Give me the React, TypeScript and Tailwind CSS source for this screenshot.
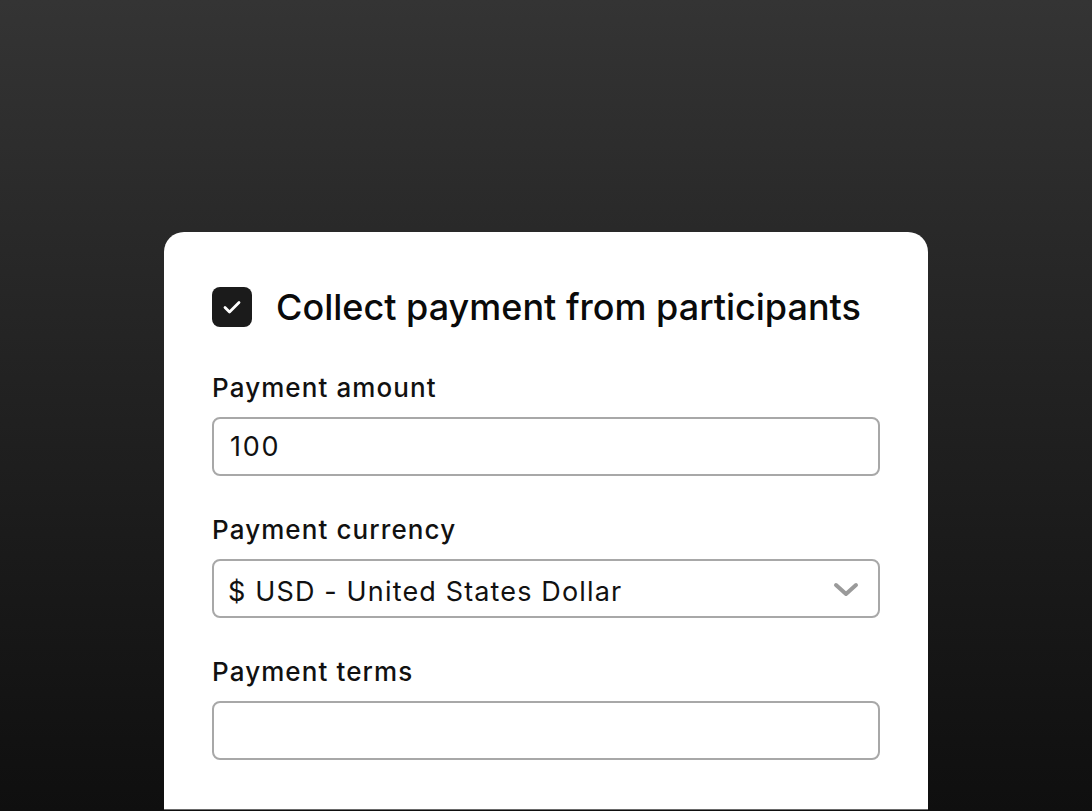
import { useState } from "react";

function Field({ label, children }: { label: string; children: React.ReactNode }) {
  return (
    <div className="flex flex-col">
      <label className="text-[26px] leading-[34px] font-medium tracking-[1.1px] text-[#111]">{label}</label>
      <div className="mt-[12px]">{children}</div>
    </div>
  );
}

export default function App() {
  const [amount, setAmount] = useState("100");
  const [terms, setTerms] = useState("");

  return (
    <div
      className="flex h-[811px] w-full justify-center overflow-hidden bg-gradient-to-b from-[#343434] to-[#0f0f0f] pt-[232px]"
      style={{ fontFamily: "Inter, 'Noto Sans', sans-serif" }}
    >
      <section className="h-[578px] w-[764px] shrink-0 rounded-t-[20px] border-b border-[#6a6a6a] bg-white px-[48px] pt-[55px]">
        <div className="flex items-center gap-[24px]">
          <span className="flex h-[40px] w-[40px] items-center justify-center rounded-[8px] bg-[#1b1b1b]">
            <svg width="24" height="24" viewBox="0 0 24 24" fill="none" stroke="white" strokeWidth="2.8" strokeLinecap="round" strokeLinejoin="round">
              <path d="M5 12.5l4.5 4.5L19 7.5" />
            </svg>
          </span>
          <h1 className="text-[36px] leading-[40px] font-medium text-[#0a0a0a]">
            Collect payment from participants
          </h1>
        </div>

        <div className="mt-[44px] flex flex-col gap-[37px]">
          <Field label="Payment amount">
            <input
              value={amount}
              onChange={(e) => setAmount(e.target.value)}
              className="h-[59px] w-full rounded-[8px] border-2 border-[#a8a8a8] px-[16px] text-[27px] tracking-[1.8px] text-[#111] outline-none"
            />
          </Field>
          <Field label="Payment currency">
            <div className="flex h-[59px] w-full items-center justify-between rounded-[8px] border-2 border-[#a8a8a8] pl-[14px] pr-[18px] text-[#111]">
              <span className="pt-[7px] text-[27px] tracking-[1.15px]">$ USD - United States Dollar</span>
              <svg width="28" height="18" viewBox="0 0 28 18" fill="none" stroke="#9a9a9a" strokeWidth="4" strokeLinecap="round" strokeLinejoin="round">
                <path d="M4 5l10 9 10-9" />
              </svg>
            </div>
          </Field>
          <Field label="Payment terms">
            <input
              value={terms}
              onChange={(e) => setTerms(e.target.value)}
              className="h-[59px] w-full rounded-[8px] border-2 border-[#a8a8a8] px-[16px] text-[27px] text-[#111] outline-none"
            />
          </Field>
        </div>
      </section>
    </div>
  );
}
